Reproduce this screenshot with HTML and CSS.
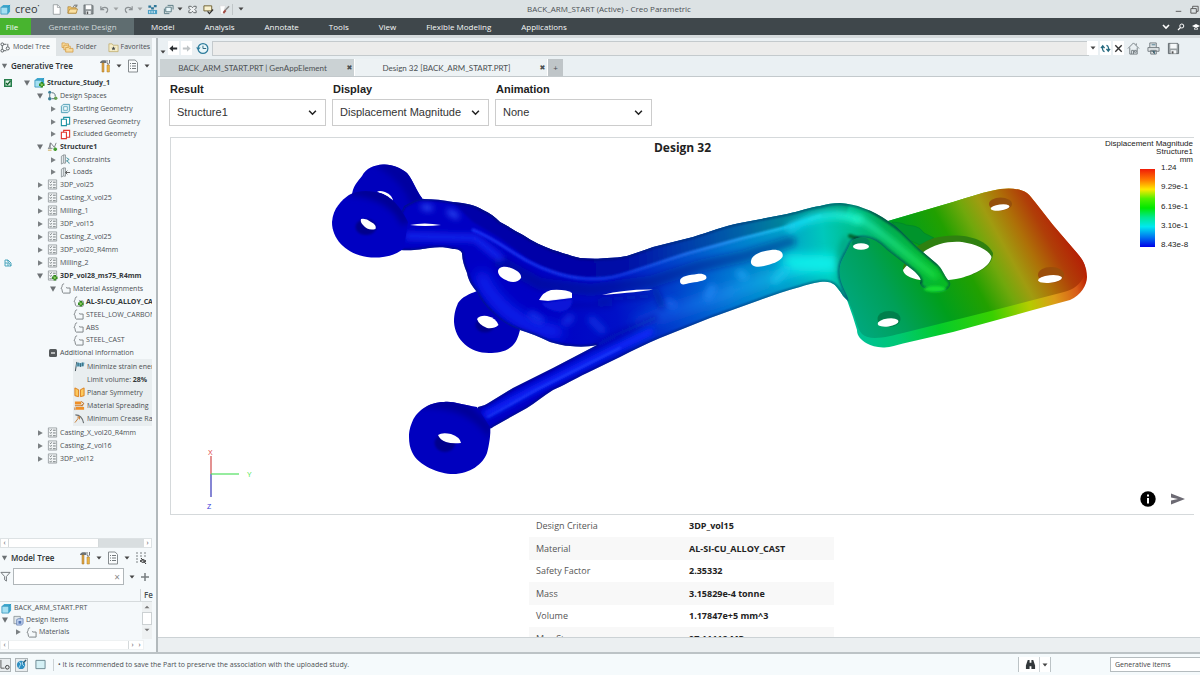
FILE: index.html
```html
<!DOCTYPE html>
<html lang="en">
<head>
<meta charset="utf-8">
<title>BACK_ARM_START (Active) - Creo Parametric</title>
<link rel="stylesheet" href="styles.css">
</head>
<body>
<svg class="defs" aria-hidden="true">
  <symbol id="cube" viewBox="0 0 12 12"><path d="M1 3.500 3.500 1H11v7.500L8.500 11H1z" fill="#3fa9cf"/><path d="M1 3.500h7.500V11H1z" fill="#a5e0f2"/><path d="M1 3.500h7.500V11H1z M8.500 3.500 11 1" fill="none" stroke="#2b8fb8" stroke-width=".8"/></symbol>
  <symbol id="down" viewBox="0 0 6 6"><path d="M.5 1.500h5L3 4.500z" fill="#444"/></symbol>
  <symbol id="open" viewBox="0 0 8 8"><path d="M1 1.500h6L4 6.800z" fill="#6c7174"/></symbol>
  <symbol id="shut" viewBox="0 0 8 8"><path d="M2 1.200v5.600L6.800 4z" fill="#7b8083"/></symbol>
  <symbol id="page" viewBox="0 0 12 12"><path d="M2.500.8h4.700L10 3.600v7.600H2.500z" fill="#fff" stroke="#888e91" stroke-width=".8"/><path d="M7 .8v3h3" fill="none" stroke="#888e91" stroke-width=".7"/></symbol>
  <symbol id="folder" viewBox="0 0 12 12"><path d="M1 10V3h3l1 1h5v6z" fill="#f1c56d" stroke="#a67b2d" stroke-width=".7"/><path d="m1 10 2-4.500h8.500L10 10z" fill="#fbe0a0" stroke="#a67b2d" stroke-width=".7"/><path d="M7 3c.5-2 2-2 3-1.500M10.800.5v2H9" fill="none" stroke="#444" stroke-width=".8"/></symbol>
  <symbol id="save" viewBox="0 0 12 12"><path d="M1 1h9l1 1v9H1z" fill="#8b9295" stroke="#555c60" stroke-width=".7"/><path d="M3 1.300h6v4.400H3z" fill="#fff"/><path d="M3.500 7.500h5V11h-5z" fill="#e8ecee"/><path d="M4.200 8.200h1.500V11H4.200z" fill="#555"/></symbol>
  <symbol id="undo" viewBox="0 0 12 12"><path d="M2 2.500v3.700h3.700M2.300 6C4 3 9 3 9.500 6c.2 1.700-.7 2.800-2 3.500" fill="none" stroke="#8b9194" stroke-width="1.300"/></symbol>
  <symbol id="redo" viewBox="0 0 12 12"><path d="M10 2.500v3.700H6.300M9.700 6C8 3 3 3 2.500 6c-.2 1.700.7 2.800 2 3.500" fill="none" stroke="#8b9194" stroke-width="1.300"/></symbol>
  <symbol id="regen" viewBox="0 0 12 12"><path d="M1.500 1.500h3v2.500h-3zM7.500 1h3v2.500h-3zM4.500 3.500h3V6h-3z" fill="#2f7698"/><path d="M1 6.500h10v4.500H1z" fill="#4c9fc4"/><path d="M3 7.500v2.500M5.500 7.500v2.500M8 7.500v2.500" stroke="#e6f4fa"/></symbol>
  <symbol id="windows" viewBox="0 0 12 12"><path d="M3 3.500h6v5H3z" fill="#eaf7fb" stroke="#54767f"/><path d="M5 1.500h6V6M1.500 5v5.500H7" fill="none" stroke="#54767f"/></symbol>
  <symbol id="closewin" viewBox="0 0 12 12"><path d="M2 2.500h2.500L6 4l1.500-1.500H10v2L8.500 6 10 7.500v2H7.500L6 8 4.500 9.500H2v-2L3.500 6 2 4.500z" fill="#eef1f2" stroke="#4c5255" stroke-width=".9"/></symbol>
  <symbol id="select" viewBox="0 0 12 12"><path d="M1 2h8.500v5.500H1z" fill="#f8f1cf" stroke="#6a5c2c" stroke-width="1"/><path d="m5 8 2 2.500L11 6" fill="none" stroke="#333" stroke-width="1.300"/></symbol>
  <symbol id="brush" viewBox="0 0 12 12"><path d="M1 2h6L4.500 11H2z" fill="#fff" stroke="#ccc" stroke-width=".5"/><path d="m11 2.500-4 4" stroke="#888" stroke-width="1.700"/><path d="m6.500 6 1.500 1.500-2.500 3-1.500-1.500z" fill="#a04a42"/></symbol>
  <symbol id="struct" viewBox="0 0 12 12"><circle cx="2.500" cy="2.500" r="1.500"/><circle cx="2.500" cy="9.500" r="1.500"/><circle cx="8.500" cy="7" r="1.700"/><path d="M2.500 4v4M4 2.500h3M4 9.500h3M8.500 2v3"/></symbol>
  <symbol id="folders" viewBox="0 0 14 12"><g fill="#f8dc9f" stroke="#d3983e" stroke-width=".8"><path d="M1 1h3l1 1h3v4H1z"/><path d="M3 3.500h3l1 1h3v4H3z"/><path d="M5 6h3l1 1h4v4H5z"/></g></symbol>
  <symbol id="fav" viewBox="0 0 12 12"><path d="M1 10.500V2h3.500l1 1.500H11v7z" fill="#f5edc9" stroke="#bca765" stroke-width=".8"/><path d="m6 4.700.7 1.500 1.600.2-1.200 1 .4 1.600L6 8.200 4.500 9l.4-1.600-1.200-1 1.600-.2z" fill="#43494b"/></symbol>
  <symbol id="tools" viewBox="0 0 12 14"><path d="M1 3.500C2 1 4.500 1 7 1.500L7 4H1z" fill="#6d7376"/><path d="M3 4h2v9H3z" fill="#dca545" stroke="#a87524" stroke-width=".5"/><path d="M8 6h2.400v7H8z" fill="#f0b844" stroke="#a87524" stroke-width=".5"/><path d="M8 1v3l1.200 1.500L10.500 4V1" fill="none" stroke="#777" stroke-width="1"/></symbol>
  <symbol id="list" viewBox="0 0 12 14"><path d="M1.500 1h6.700L10.500 3.500V13h-9z" fill="#fafcfd" stroke="#868c8f"/><path d="M3 4.500h1M3 7h1M3 9.500h1M5 4.500h4M5 7h4M5 9.500h4" stroke="#73797c"/></symbol>
  <symbol id="design" viewBox="0 0 12 12"><circle cx="3" cy="2.500" r="1.700" fill="#3c8199"/><circle cx="3" cy="9.500" r="1.900" fill="#3c8199"/><circle cx="9.500" cy="9" r="1.900" fill="#65a14e"/><path d="M3 4v4M5 3c3 0 4 1 4 4M5 9.500h3" fill="none" stroke="#4d6870"/></symbol>
  <symbol id="items" viewBox="0 0 12 12"><path d="M1 1.500h7v8H1z" fill="#dfe6ea" stroke="#7f888c" stroke-width=".8"/><path d="M4 5 6 4h5v5l-1.500 2H4z" fill="#c3d3ee" stroke="#5d79b0" stroke-width=".8"/><path d="M6 6.500h3v3H6z" fill="#5577b5"/></symbol>
  <symbol id="box" viewBox="0 0 12 12"><path d="M1.500 3.500 3.500 1.500h7v7l-2 2h-7z" fill="#d4edf4" stroke="#4a9bb2"/><path d="M4 4h4v4H4z" fill="#f4fbfd" stroke="#4a9bb2" stroke-width=".8"/></symbol>
  <symbol id="copy" viewBox="0 0 12 12"><path d="M4 4V1.500h6.500V9H7" fill="#fff" stroke="currentColor" stroke-width="1.200"/><path d="M1.500 3.500h5.500v7H1.500z" fill="#fff" stroke="currentColor" stroke-width="1.200"/></symbol>
  <symbol id="truss" viewBox="0 0 12 12"><path d="M2 8 4 2l4 5 2-5M1 8h5M3.500 2v6" fill="none" stroke="#777d80"/><path d="M9 7v4M7 9h4" stroke="#3f9b2a" stroke-width="2"/><path d="M1 10h4" stroke="#c8a34c"/></symbol>
  <symbol id="constraint" viewBox="0 0 12 12"><path d="M1.500 2.500 4 1v8.500L1.500 11zM4 1h2v9H4" fill="#e4eaed" stroke="#7d8588" stroke-width=".8"/><path d="m7 4 3 2-3 1.500 3 2v1" fill="none" stroke="#3c8e9d"/></symbol>
  <symbol id="load" viewBox="0 0 12 12"><path d="M1.500 2.500 4 1v8.500L1.500 11zM4 1h2v9H4" fill="#e4eaed" stroke="#7d8588" stroke-width=".8"/><path d="M11 6H6M8 4 6 6l2 2" fill="none" stroke="#555"/></symbol>
  <symbol id="study" viewBox="0 0 12 12"><path d="M1.500 1h9v10h-9z" fill="#f3f6f7" stroke="#868d90" stroke-width=".8"/><path d="m3 3 1 1 1-1.500M3 6l1 1 1-1.500M3 9l1 1 1-1.500M6.500 3.500h3M6.500 6.500h3M6.500 9.500h3" fill="none" stroke="#5e6669" stroke-width=".9"/></symbol>
  <symbol id="plus" viewBox="0 0 12 12"><path d="M8.500 5.500v6M5.500 8.500h6" stroke="#2f8b1d" stroke-width="2.600"/><path d="M8.500 7v3M7 8.500h3" stroke="#b2e07f" stroke-width=".8"/></symbol>
  <symbol id="material" viewBox="0 0 12 12"><path d="M4.500 1C1 1 3.500 4.500 1 5.500 3 6.500 2 11 3.500 11H11V5.500H7.500L6.500 4.500" fill="none" stroke="#777d80"/></symbol>
  <symbol id="flagicon" viewBox="0 0 12 12"><path d="M3 1 1.500 11" stroke="#38464e"/><path d="M3 2c2-1.500 3 1 5 0 1.500-.7 2-.5 3.500 0l-1 4C9 5 8 7 6 6c-1.500-.7-2.500 0-3.700.5z" fill="#6aaec6"/><path d="M4.500 2v4M7 2.500v4M9.500 1.700v4" stroke="#28495c" stroke-width=".8"/></symbol>
  <symbol id="planar" viewBox="0 0 12 12"><path d="M1 1 5 3v7.500L1 9.500zM11 1 7 3v7.500l4-1z" fill="#fcc95e" stroke="#d97b18"/></symbol>
  <symbol id="spread" viewBox="0 0 12 12"><path d="M1 1.500h7v3.500H1zM2 7.500h9v3H2z" fill="#ef8f26"/><path d="M1 6.300h9M8 1.500 11 4 8 6M1 8v3" fill="none" stroke="#b96718"/></symbol>
  <symbol id="crease" viewBox="0 0 12 12"><path d="M1.500 2c5 0 8 4 9 9" fill="none" stroke="#696f72" stroke-width="1.200"/><path d="M1 10.500 6 4M3.500 4.500 6 4v3" fill="none" stroke="#c77b30"/></symbol>
</svg>

<header class="titlebar">
  <svg class="ic"><use href="#cube"/></svg>
  <span class="brand">creo<sup>•</sup></span>
  <div class="quick">
    <button aria-label="New"><svg class="ic"><use href="#page"/></svg></button>
    <button aria-label="Open"><svg class="ic"><use href="#folder"/></svg></button>
    <button aria-label="Save"><svg class="ic"><use href="#save"/></svg></button>
    <button aria-label="Undo"><svg class="ic"><use href="#undo"/></svg></button>
    <button class="arrow faint" aria-label="Undo list"><svg><use href="#down"/></svg></button>
    <button aria-label="Redo"><svg class="ic"><use href="#redo"/></svg></button>
    <button class="arrow faint" aria-label="Redo list"><svg><use href="#down"/></svg></button>
    <button aria-label="Regenerate"><svg class="ic"><use href="#regen"/></svg></button>
    <button aria-label="Windows"><svg class="ic"><use href="#windows"/></svg></button>
    <button class="arrow" aria-label="Window list"><svg><use href="#down"/></svg></button>
    <button aria-label="Close"><svg class="ic"><use href="#closewin"/></svg></button>
    <button aria-label="Select"><svg class="ic"><use href="#select"/></svg></button>
    <button aria-label="Appearance"><svg class="ic"><use href="#brush"/></svg></button>
    <button class="arrow last" aria-label="Customize"><svg><use href="#down"/></svg></button>
  </div>
  <h1>BACK_ARM_START (Active) - Creo Parametric</h1>
  <div class="winbtns">
    <button aria-label="Minimize"><svg class="ic" viewBox="0 0 12 12"><path d="M3 8h6" stroke="#555"/></svg></button>
    <button aria-label="Restore"><svg class="ic" viewBox="0 0 12 12"><path d="M2 5h6v5H2zM4 5V2.500h6V8H8" fill="none" stroke="#555"/></svg></button>
  </div>
</header>

<nav class="ribbon">
  <button class="file">File</button>
  <button class="current">Generative Design</button>
  <button>Model</button><button>Analysis</button><button>Annotate</button><button>Tools</button><button>View</button><button>Flexible Modeling</button><button>Applications</button>
  <div class="right">
    <button aria-label="Collapse ribbon"><svg viewBox="0 0 8 8"><path d="m1 2 3 3 3-3" fill="none" stroke="#fff" stroke-width="1.600"/></svg></button>
    <button aria-label="Search"><svg viewBox="0 0 8 8"><circle cx="4.800" cy="3" r="2" fill="none" stroke="#fff"/><path d="M3.500 4.500 1 7" stroke="#fff" stroke-width="1.300"/></svg></button>
    <button aria-label="Learning"><svg viewBox="0 0 8 8"><path d="m0 3 4-2 4 2-4 2zM2 5v1.500h4V5L4 6z" fill="#fff"/></svg></button>
  </div>
</nav>

<div class="work">
  <aside class="side">
    <div class="sidetabs">
      <button class="on"><svg class="ic line"><use href="#struct"/></svg>Model Tree</button>
      <button><svg class="ic wide"><use href="#folders"/></svg>Folder</button>
      <button><svg class="ic"><use href="#fav"/></svg>Favorites</button>
    </div>
    <div class="panelhead">
      <svg class="tri"><use href="#open"/></svg><h2>Generative Tree</h2>
      <button aria-label="Settings"><svg class="tool"><use href="#tools"/></svg><svg class="dn"><use href="#down"/></svg></button>
      <button aria-label="Show"><svg class="tool"><use href="#list"/></svg><svg class="dn"><use href="#down"/></svg></button>
    </div>
    <ul class="tree">
      <li><div class="row strong"><svg class="flag" viewBox="0 0 8 8"><path d="M0 0h8v8H0z" fill="#267e4b"/><path d="M1.500 1.500h5v5h-5z" fill="#dff3e5"/><path d="m2 4 1.500 1.500L6.500 2" fill="none" stroke="#14612f" stroke-width="1.200"/></svg><svg class="tri"><use href="#open"/></svg><svg class="ic"><use href="#cube"/><use href="#plus"/></svg>Structure_Study_1</div>
        <ul>
          <li><div class="row"><svg class="tri"><use href="#open"/></svg><svg class="ic"><use href="#design"/></svg>Design Spaces</div>
            <ul>
              <li><div class="row"><svg class="tri"><use href="#shut"/></svg><svg class="ic"><use href="#box"/></svg>Starting Geometry</div></li>
              <li><div class="row"><svg class="tri"><use href="#shut"/></svg><svg class="ic teal"><use href="#copy"/></svg>Preserved Geometry</div></li>
              <li><div class="row"><svg class="tri"><use href="#shut"/></svg><svg class="ic red"><use href="#copy"/></svg>Excluded Geometry</div></li>
            </ul></li>
          <li><div class="row strong"><svg class="tri"><use href="#open"/></svg><svg class="ic"><use href="#truss"/></svg>Structure1</div>
            <ul>
              <li><div class="row"><svg class="tri"><use href="#shut"/></svg><svg class="ic"><use href="#constraint"/></svg>Constraints</div></li>
              <li><div class="row"><svg class="tri"><use href="#shut"/></svg><svg class="ic"><use href="#load"/></svg>Loads</div></li>
            </ul></li>
          <li><div class="row"><svg class="tri"><use href="#shut"/></svg><svg class="ic"><use href="#study"/></svg>3DP_vol25</div></li>
          <li><div class="row"><svg class="tri"><use href="#shut"/></svg><svg class="ic"><use href="#study"/></svg>Casting_X_vol25</div></li>
          <li><div class="row"><svg class="tri"><use href="#shut"/></svg><svg class="ic"><use href="#study"/></svg>Milling_1</div></li>
          <li><div class="row"><svg class="tri"><use href="#shut"/></svg><svg class="ic"><use href="#study"/></svg>3DP_vol15</div></li>
          <li><div class="row"><svg class="tri"><use href="#shut"/></svg><svg class="ic"><use href="#study"/></svg>Casting_Z_vol25</div></li>
          <li><div class="row"><svg class="tri"><use href="#shut"/></svg><svg class="ic"><use href="#study"/></svg>3DP_vol20_R4mm</div></li>
          <li><div class="row"><svg class="flag" viewBox="0 0 8 8"><path d="M1 1h3l3 3v3H1zM1 4h3v3M3 1l4 6" fill="none" stroke="#4ba6bd"/></svg><svg class="tri"><use href="#shut"/></svg><svg class="ic"><use href="#study"/></svg>Milling_2</div></li>
          <li><div class="row strong"><svg class="tri"><use href="#open"/></svg><svg class="ic"><use href="#study"/><use href="#plus"/></svg>3DP_vol28_ms75_R4mm</div>
            <ul>
              <li><div class="row"><svg class="tri"><use href="#open"/></svg><svg class="ic"><use href="#material"/></svg>Material Assignments</div>
                <ul>
                  <li><div class="row strong"><svg class="tri"></svg><svg class="ic"><use href="#material"/><use href="#plus"/></svg>AL-SI-CU_ALLOY_CAST</div></li>
                  <li><div class="row"><svg class="tri"></svg><svg class="ic"><use href="#material"/></svg>STEEL_LOW_CARBON</div></li>
                  <li><div class="row"><svg class="tri"></svg><svg class="ic"><use href="#material"/></svg>ABS</div></li>
                  <li><div class="row"><svg class="tri"></svg><svg class="ic"><use href="#material"/></svg>STEEL_CAST</div></li>
                </ul></li>
              <li><div class="row more"><svg class="tri" viewBox="0 0 8 8"><rect width="8" height="8" rx="1.500" fill="#55595b"/><path d="M2 4h4" stroke="#fff" stroke-width="1.200"/></svg>Additional Information</div>
                <div class="info">
                  <div class="row"><svg class="ic"><use href="#flagicon"/></svg>Minimize strain energy</div>
                  <div class="row"><svg class="ic"></svg><span>Limit volume: <b>28%</b></span></div>
                  <div class="row"><svg class="ic"><use href="#planar"/></svg>Planar Symmetry</div>
                  <div class="row"><svg class="ic"><use href="#spread"/></svg>Material Spreading</div>
                  <div class="row"><svg class="ic"><use href="#crease"/></svg>Minimum Crease Radius</div>
                </div></li>
            </ul></li>
          <li><div class="row"><svg class="tri"><use href="#shut"/></svg><svg class="ic"><use href="#study"/></svg>Casting_X_vol20_R4mm</div></li>
          <li><div class="row"><svg class="tri"><use href="#shut"/></svg><svg class="ic"><use href="#study"/></svg>Casting_Z_vol16</div></li>
          <li><div class="row"><svg class="tri"><use href="#shut"/></svg><svg class="ic"><use href="#study"/></svg>3DP_vol12</div></li>
        </ul></li>
    </ul>
    <div class="hbar"><span>‹</span><i class="thumb"></i><i class="track"></i><span>›</span></div>

    <div class="panelhead lower">
      <svg class="tri"><use href="#open"/></svg><h2>Model Tree</h2>
      <button aria-label="Settings"><svg class="tool"><use href="#tools"/></svg><svg class="dn"><use href="#down"/></svg></button>
      <button aria-label="Show"><svg class="tool"><use href="#list"/></svg><svg class="dn"><use href="#down"/></svg></button>
      <button aria-label="Hide items"><svg class="tool" viewBox="0 0 12 14"><path d="M1 2h2M1 5h2M1 8h2M1 11h2M5 2h2M5 5h2M9 2h2M9 5h2" stroke="#a2a8aa" stroke-width="1.500"/><path d="M5 10q3-3 6 0-3 3-6 0M6 7l5 6" fill="none" stroke="#333"/></svg></button>
    </div>
    <div class="filter">
      <svg class="ic" viewBox="0 0 12 12"><path d="M1 1.500h10L7 6v5L5 9.500V6z" fill="none" stroke="#6c7275"/></svg>
      <label class="box"><input type="text" aria-label="Filter tree"><span>×</span></label>
      <button aria-label="Filter options"><svg class="dn"><use href="#down"/></svg></button>
      <button class="add" aria-label="Add"><svg class="tri" viewBox="0 0 8 8"><path d="M4 0v8M0 4h8" stroke="#777d80" stroke-width="1.500"/></svg></button>
    </div>
    <div class="colhead"><span>Fe</span></div>
    <div class="model">
      <ul>
        <li><svg class="ic"><use href="#cube"/></svg>BACK_ARM_START.PRT</li>
        <li><svg class="tri"><use href="#open"/></svg><svg class="ic"><use href="#items"/></svg>Design Items</li>
        <li class="deep"><svg class="tri"><use href="#shut"/></svg><svg class="ic"><use href="#material"/></svg>Materials</li>
        <li class="deep"><svg class="tri"></svg><svg class="ic"><use href="#cube"/></svg></li>
      </ul>
      <div class="vbar"><svg viewBox="0 0 8 8"><path d="m2 5 2-2 2 2z" fill="#777"/></svg><i></i><svg viewBox="0 0 8 8"><path d="m2 3 2 2 2-2z" fill="#777"/></svg></div>
    </div>
    <div class="hbar low"><span>‹</span><i class="thumb"></i><span>›</span><span>›</span></div>
  </aside>

  <main class="main">
    <div class="address">
      <svg class="dn"><use href="#down"/></svg>
      <button class="boxed" aria-label="Back"><svg class="ic" viewBox="0 0 12 12"><path d="M1.500 6 5.500 2.500V5H10v2H5.500v2.500z" fill="#2a2e30"/></svg></button>
      <button class="boxed" aria-label="Forward"><svg class="ic" viewBox="0 0 12 12"><path d="M10.500 6 6.500 2.500V5H2v2h4.500v2.500z" fill="#bfc4c6"/></svg></button>
      <button class="history" aria-label="History"><svg class="big" viewBox="0 0 14 14"><circle cx="7.500" cy="7" r="5.300" fill="#e8f6fa" stroke="#2d7c9c" stroke-width="1.300"/><path d="M7.500 4v3H11" fill="none" stroke="#27617a"/><path d="M0 6h5L2.500 9z" fill="#2d7c9c"/></svg></button>
      <input type="text" aria-label="Address">
      <button class="boxed" aria-label="Address list"><svg class="dn"><use href="#down"/></svg></button>
      <button class="boxed" aria-label="Reload"><svg class="ic" viewBox="0 0 12 12"><path d="M5 9.500C2.500 9 2.500 6 3 4M1 5.500 3 3l2 2.500M7 2.500C9.500 3 9.500 6 9 8M11 6.500 9 9 7 6.500" fill="none" stroke="#276b80" stroke-width="1.400"/></svg></button>
      <button class="boxed" aria-label="Stop"><svg class="ic" viewBox="0 0 12 12"><path d="m2.500 2.500 7 7M9.500 2.500l-7 7" stroke="#333" stroke-width="1.500"/></svg></button>
      <div class="page">
        <button aria-label="Home"><svg class="big" viewBox="0 0 14 14"><path d="m1 7 6-6 6 6M3 6v7h8V6M10 1.500v2M5 13V9h2v4M8 9h2v2H8z" fill="none" stroke="#737b7f"/></svg></button>
        <button aria-label="Print"><svg class="big" viewBox="0 0 14 14"><path d="M3 6V1h7v5M1 6h12v4H1zM4 9h6v4H4z" fill="#dfe4e6" stroke="#737b7f"/><path d="M5 3h4M6 10h2v3" stroke="#49788a"/></svg></button>
        <button aria-label="Save page"><svg class="big" viewBox="0 0 14 14"><path d="M1.500 1.500h10l1 1v10h-11z" fill="#9aa1a4" stroke="#60686c"/><path d="M3.500 2h7v5h-7zM4 9h6v3.500H4z" fill="#f6f9fa"/><path d="M5 10h2v2.500H5z" fill="#555"/></svg></button>
      </div>
    </div>
    <div class="doctabs">
      <button class="tab"><span>BACK_ARM_START.PRT | GenAppElement</span><b>✖</b></button>
      <button class="tab on"><span>Design 32 [BACK_ARM_START.PRT]</span><b>✖</b></button>
      <button class="new" aria-label="New tab">+</button>
    </div>
    <section class="content">
      <form class="controls">
        <div class="field"><label for="result">Result</label><div class="pick"><select id="result"><option>Structure1</option></select><svg viewBox="0 0 8 8"><path d="m1 2.500 3 3 3-3" fill="none" stroke="#222" stroke-width="1.400"/></svg></div></div>
        <div class="field"><label for="display">Display</label><div class="pick"><select id="display"><option>Displacement Magnitude</option></select><svg viewBox="0 0 8 8"><path d="m1 2.500 3 3 3-3" fill="none" stroke="#222" stroke-width="1.400"/></svg></div></div>
        <div class="field"><label for="animation">Animation</label><div class="pick"><select id="animation"><option>None</option></select><svg viewBox="0 0 8 8"><path d="m1 2.500 3 3 3-3" fill="none" stroke="#222" stroke-width="1.400"/></svg></div></div>
      </form>
      <div class="viewer">
        <svg class="scene" viewBox="171 138 1023 376" role="img" aria-label="Displacement magnitude on the back arm">
          <defs>
            <linearGradient id="gPlate" gradientUnits="userSpaceOnUse" x1="857" y1="333" x2="1059" y2="221">
              <stop offset="0" stop-color="#00a880"/><stop offset=".2" stop-color="#00a058"/><stop offset=".38" stop-color="#009f1c"/><stop offset=".55" stop-color="#22a000"/><stop offset=".66" stop-color="#70a80c"/><stop offset=".74" stop-color="#a09c10"/><stop offset=".83" stop-color="#ae7008"/><stop offset=".92" stop-color="#b03e08"/><stop offset="1" stop-color="#b42206"/>
            </linearGradient>
            <linearGradient id="gEdge" gradientUnits="userSpaceOnUse" x1="855" y1="340" x2="1087" y2="280">
              <stop offset="0" stop-color="#00c098"/><stop offset=".18" stop-color="#00c874"/><stop offset=".35" stop-color="#04cc2c"/><stop offset=".58" stop-color="#38d000"/><stop offset=".74" stop-color="#b4cc00"/><stop offset=".85" stop-color="#dc9c18"/><stop offset=".95" stop-color="#d85a18"/><stop offset="1" stop-color="#b82000"/>
            </linearGradient>
            <linearGradient id="gBeam" gradientUnits="userSpaceOnUse" x1="540" y1="300" x2="950" y2="250">
              <stop offset="0" stop-color="#0000c4"/><stop offset=".18" stop-color="#0010c8"/><stop offset=".32" stop-color="#0040cc"/><stop offset=".46" stop-color="#0074d2"/><stop offset=".6" stop-color="#009fca"/><stop offset=".7" stop-color="#00c8bc"/><stop offset=".77" stop-color="#00c090"/><stop offset=".85" stop-color="#00ac54"/><stop offset="1" stop-color="#08bc1c"/>
            </linearGradient>
            <linearGradient id="gTop" gradientUnits="userSpaceOnUse" x1="480" y1="240" x2="860" y2="205">
              <stop offset="0" stop-color="#0000a8"/><stop offset=".35" stop-color="#0008a8"/><stop offset=".5" stop-color="#0034ac"/><stop offset=".68" stop-color="#0062a8"/><stop offset=".82" stop-color="#008c98"/><stop offset="1" stop-color="#00a874"/>
            </linearGradient>
            <linearGradient id="gHi" gradientUnits="userSpaceOnUse" x1="480" y1="240" x2="950" y2="270">
              <stop offset="0" stop-color="#1c30f4"/><stop offset=".3" stop-color="#1034e0"/><stop offset=".52" stop-color="#2490f4"/><stop offset=".68" stop-color="#10d4e8"/><stop offset=".8" stop-color="#20f4c4"/><stop offset="1" stop-color="#20e830"/>
            </linearGradient>
            <filter id="b1" filterUnits="userSpaceOnUse" x="171" y="138" width="1023" height="376"><feGaussianBlur stdDeviation="1"/></filter>
            <filter id="b3" filterUnits="userSpaceOnUse" x="171" y="138" width="1023" height="376"><feGaussianBlur stdDeviation="3"/></filter>
            <filter id="b6" filterUnits="userSpaceOnUse" x="171" y="138" width="1023" height="376"><feGaussianBlur stdDeviation="6"/></filter>
            <path id="beam" d="M404 206C411 203 416 198 424 199 434 199 443 200 453 202 466 203 475 205 483 210 490 213 495 217 500 222 508 226 515 231 523 235 533 242 543 246 553 250 563 253 571 256 580 258 590 259 600 259 607 258 615 258 621 257 627 256 636 253 645 250 653 247L693 237C709 232 724 226 740 223L787 214C800 211 811 207 820 206 827 204 833 203 840 203 849 204 856 205 863 208 872 211 881 216 888 221 895 225 898 228 902 232L917 247 937 264C942 268 944 275 948 280 954 284 948 292 938 292 930 291 920 288 920 283 922 279 920 277 914 271L887 250C880 243 876 240 868 238 860 236 852 239 850 244 844 258 838 262 840 277 842 288 848 294 849 302L843 296C840 291 838 288 835 285 831 282 827 281 820 282 812 283 806 285 800 287 786 291 773 295 760 300L710 318 660 338C646 344 633 350 620 357L587 373C574 379 563 386 553 390 543 396 535 403 527 408L493 427C488 432 476 424 478 414L478 407C483 406 487 404 490 402L513 388 553 368 597 345C588 347 579 347 570 346 564 346 558 344 550 342 540 337 530 333 520 330 508 326 500 320 494 314 485 306 480 299 477 292 472 286 468 280 467 273 464 266 462 259 462 253 460 250 458 249 453 249 445 247 438 247 430 248 422 249 414 251 400 250L396 225Z"/>
            <clipPath id="beamClip"><use href="#beam"/></clipPath>
            <path id="eyeBack" d="M352 196C352 187 358 181 362 176 366 168 374 165 383 164.500 392 164 401 168 407 173 413 180 416 190 422 198L425 210 410 224 396 230 372 215Z"/>
            <clipPath id="eyeBackClip"><use href="#eyeBack"/></clipPath>
            <path id="eyeFront" d="M332 222C333 208 342 200 349 195 358 190 371 190 383 194 396 200 403 212 408 222L404 248C396 256 382 258 371 257.500 350 256 332 242 332 222Z"/>
            <clipPath id="eyeFrontClip"><use href="#eyeFront"/></clipPath>
            <path id="eyeLow" d="M409 437C409 431 410 427 413 420 417 412 428 402 444 402 454 401 462 405 477 407L490 427C491 434 489 446 487 453 483 464 470 474 453 474 440 474 418 466 412 452 410 448 409 443 409 437Z"/>
            <clipPath id="eyeLowClip"><use href="#eyeLow"/></clipPath>
          </defs>
          <!-- mounting plate -->
          <path d="M888 221 953 202C967 198 980 193 993 190.500 1003 188 1018 187 1027 193 1030 195 1033 200 1035 202L1053 225 1077 253C1082 259 1087 266 1087 277 1087 285 1081 295 1070 300L1033 310 953 332 903 343.500C896 345 890 348 883 347.500 876 347 871 346 867 343.500 861 340 857 336 857 330L853 317 847 300 834 284 840 240Z" fill="url(#gEdge)"/>
          <path d="M888 221 953 202C967 198 980 193 993 190.500 1003 188 1018 187 1027 193 1030 195 1033 200 1035 202L1053 225 1077 253C1083 260 1088 267 1084 276 1081 284 1073 290 1064 292L987 312 903 333C890 336 870 342 862 334 857 328 856 320 853 312L847 298 838 284 842 235Z" fill="url(#gPlate)"/>
          <path d="M892 222Q903 223 906 225L914 226Q920 227 924 233L934 238 920 245 905 238Z" fill="#00942c" stroke="#00802a" stroke-width=".6"/>
          <g stroke="none">
            <path d="M903 267Q908 247 934 238C957 232 985 236 993 253Q993 268 968 276L940 281 920 280Q902 277 903 267Z" fill="#2f8010"/>
            <path d="M903 270Q906 265 922 253C935 243 950 241 962 242 976 244 989 250 991.500 257 990 267 975 274 961 278 952 280 942 281 934 280L920 280Q904 277 903 270Z" fill="#fff"/>
            <ellipse cx="861" cy="243" rx="9" ry="6" fill="#00865a"/><ellipse cx="861" cy="246.500" rx="8" ry="3.200" fill="#fff"/>
            <ellipse cx="1000.500" cy="204" rx="11.500" ry="6.500" fill="#96500c"/><ellipse cx="1000" cy="207.500" rx="9.500" ry="3" fill="#fff" transform="rotate(-8 1000 207)"/>
            <ellipse cx="1051" cy="275" rx="13" ry="8" fill="#9c4e0a"/><ellipse cx="1050" cy="279" rx="12" ry="3.800" fill="#fff" transform="rotate(-6 1050 279)"/>
            <ellipse cx="889" cy="319" rx="11.500" ry="8" fill="#00804c"/><ellipse cx="888" cy="322.500" rx="10.500" ry="4" fill="#fff" transform="rotate(-8 888 322)"/>
          </g>
          <!-- mounting eyes behind the beam -->
          <use href="#eyeBack" fill="#0000bd"/>
          <g clip-path="url(#eyeBackClip)"><path d="M383 160C392 160 401 164 411 171 417 180 420 190 426 200L412 208C406 190 396 178 376 166Z" fill="#0000a0" filter="url(#b3)"/></g>
          <path d="M377 192Q379 190 385 192 393 195 393 202 386 194 377 192Z" fill="#fff"/>
          <path d="M454 322C454 313 456 308 458 303 462 297 469 294 477 291L520 330C518 338 516 343 511 347 505 352 497 353 489 353 470 353 455 340 454 322Z" fill="#0000ba"/>
          <ellipse cx="485" cy="325" rx="9.500" ry="7.500" fill="#00008c" filter="url(#b1)"/>
          <path d="M477 319Q480 315 487 316 496 318 498.500 325 494 329 487 328 479 325 477 319Z" fill="#fff"/>
          <!-- beam -->
          <use href="#beam" fill="url(#gBeam)"/>
          <g clip-path="url(#beamClip)" fill="none" stroke-linecap="round">
            <path d="M450 200 483 208 523 233 553 248 580 256 607 257 627 254 693 235 740 221 820 204 850 202 846 216 820 216 787 227 740 240 693 253 643 268 610 278 580 278 553 272 527 258 500 238 473 222Z" fill="url(#gTop)" filter="url(#b1)"/>
            <path d="M500 262 540 284 590 290 650 282 700 266 745 256 790 242" stroke="#001a80" stroke-opacity=".45" stroke-width="12" filter="url(#b3)"/>
            <path d="M473 230C500 240 520 262 553 272 575 280 600 280 613 277 640 270 665 260 693 252L740 239 787 227 820 216" stroke="url(#gHi)" stroke-width="3" filter="url(#b1)"/>
            <path d="M790 228C815 214 838 211 858 220" stroke="url(#gHi)" stroke-width="9" filter="url(#b3)"/>
            <path d="M858 218C878 228 900 250 935 276" stroke="url(#gHi)" stroke-width="6" stroke-opacity=".75" filter="url(#b3)"/>
            <path d="M640 322 710 299 770 278 825 262" stroke="url(#gHi)" stroke-width="12" stroke-opacity=".65" filter="url(#b6)"/>
            <path d="M790 262 832 264" stroke="#10f0ec" stroke-width="16" filter="url(#b6)"/>
            <path d="M846 240C838 255 840 272 846 292" stroke="#009878" stroke-width="7" stroke-opacity=".7" filter="url(#b3)"/>
            <path d="M487 414 530 391 600 356 650 332" stroke="#1028ff" stroke-width="7" filter="url(#b3)"/>
            <path d="M488 417 540 388 620 348" stroke="#2448ff" stroke-width="2" stroke-opacity=".7" filter="url(#b1)"/>
            <path d="M408 236 440 237 475 238 500 258" stroke="#1428f0" stroke-width="7" filter="url(#b3)"/>
            <path d="M424 207 430 208M450 212 456 216" stroke="#2c48f4" stroke-width="6" filter="url(#b3)"/>
            <path d="M482 278C492 300 516 326 556 332" stroke="#1030ff" stroke-width="14" stroke-opacity=".7" filter="url(#b6)"/>
            <path d="M668 302 673 305M708 296 712 288M740 274 744 276M775 280 786 270M532 315 540 320M592 320 602 330M566 322 570 318" stroke="url(#gHi)" stroke-width="8" stroke-opacity=".85" filter="url(#b3)"/>
            <path d="M850 236C878 244 900 266 920 282" stroke="#006830" stroke-width="4" filter="url(#b1)"/>
            <path d="M597 345 620 333 655 318M565 305 610 305M600 300 650 296" stroke="#0010a0" stroke-opacity=".6" stroke-width="5" filter="url(#b3)"/>
            <path d="M655 290 662 306" stroke="#001890" stroke-opacity=".7" stroke-width="4" filter="url(#b3)"/>
            <path d="M870 210 902 232 937 264" stroke="#007040" stroke-width="2" filter="url(#b1)"/>
            <use href="#beam" stroke="#001c50" stroke-opacity=".5" stroke-width="3" filter="url(#b1)"/>
          </g>
          <ellipse cx="935" cy="289" rx="11" ry="3" fill="#18dc30" filter="url(#b1)"/>
          <!-- openings through the beam -->
          <g fill="#fff">
            <path d="M410 225Q424 222 441 225 425 227 410 225Z"/>
            <path d="M498 271C499 266 506 266 511 268 517 270 522 274 521 278 518 283 511 283 506 280 501 278 498 275 498 271Z"/>
            <path d="M539 300Q543 292 551 290 566 289 572 293V298L548 301Z"/>
            <path d="M602 295Q625 289 653 289.500 640 292 602 295Z"/>
            <path d="M680 281C680 276 690 275 697 274 704 273 708 276 706 279 702 282 693 282 686 284 682 285 680 284 680 281Z"/>
            <path d="M751 261C752 254 762 251 771 250 779 249 784 252 782.500 257 779 262 772 264 764 266 756 268 750 266 751 261Z"/>
          </g>
          <path d="M541 303 572 299Q573 310 560 312 548 311 541 303Z" fill="#0818d8" filter="url(#b1)"/>
          <!-- mounting eyes in front -->
          <use href="#eyeFront" fill="#0000c2"/>
          <g clip-path="url(#eyeFrontClip)"><path d="M349 190C358 186 371 186 385 191 398 198 406 210 410 222L402 226C394 208 378 198 349 195Z" fill="#000094" filter="url(#b3)"/></g>
          <ellipse cx="366" cy="227" rx="10.500" ry="8" fill="#00008c" filter="url(#b1)"/>
          <path d="M361 219Q366 218 371 222 377 225 375.500 229 368 231 363 225 360 222 361 219Z" fill="#fff"/>
          <use href="#eyeLow" fill="#0000bf"/>
          <g clip-path="url(#eyeLowClip)"><path d="M418 406C430 397 450 398 468 403L492 427 490 440C476 416 450 406 418 408Z" fill="#000098" filter="url(#b3)"/></g>
          <ellipse cx="445" cy="443" rx="10.500" ry="9" fill="#00008c" filter="url(#b1)"/>
          <path d="M438 435Q442 432 451 434 460 437 461 443 452 444 446 442 440 440 438 435Z" fill="#fff"/>
          <!-- axes -->
          <g fill="none" stroke-width="1.200"><path d="M211 456v18" stroke="#d04848"/><path d="M211 474v23" stroke="#3535b8"/><path d="M211 474h28" stroke="#50e060"/></g>
          <g class="axis"><text x="208" y="455" fill="#e04848">X</text><text x="247" y="477" fill="#58e858">Y</text><text x="207" y="509" fill="#3535d8">Z</text></g>
        </svg>
        <h2>Design 32</h2>
        <div class="legend">
          <p>Displacement Magnitude<br>Structure1<br>mm</p>
          <div class="scale"><i></i><ol><li>1.24</li><li>9.29e-1</li><li>6.19e-1</li><li>3.10e-1</li><li>8.43e-8</li></ol></div>
        </div>
        <div class="actions">
          <button aria-label="Information"><svg viewBox="0 0 16 16"><circle cx="8" cy="8" r="7.700" fill="#000"/><path d="M7 3.500h2v2H7zM7 7h2v5.500H7z" fill="#fff"/></svg></button>
          <button aria-label="Send"><svg viewBox="0 0 16 16"><path d="M1 2.500 15 8 1 13.500V9.500L8 8 1 6.500z" fill="#6c6a73"/></svg></button>
        </div>
      </div>
      <table class="facts">
        <tbody>
          <tr><th scope="row">Design Criteria</th><td>3DP_vol15</td></tr>
          <tr><th scope="row">Material</th><td>AL-SI-CU_ALLOY_CAST</td></tr>
          <tr><th scope="row">Safety Factor</th><td>2.35332</td></tr>
          <tr><th scope="row">Mass</th><td>3.15829e-4 tonne</td></tr>
          <tr><th scope="row">Volume</th><td>1.17847e+5 mm^3</td></tr>
          <tr><th scope="row">Max Stress</th><td>97.11112 MPa</td></tr>
        </tbody>
      </table>
    </section>
    <div class="strip"></div>
  </main>
</div>

<footer class="status">
  <button class="sq" aria-label="Navigator"><svg class="ic" viewBox="0 0 12 12"><path d="M1 1v9h4" fill="none" stroke="#555"/><circle cx="8" cy="9" r="2" fill="none" stroke="#333"/></svg></button>
  <button class="sq on" aria-label="Browser"><svg class="ic" viewBox="0 0 12 12"><circle cx="5.500" cy="6.500" r="4.500" fill="#2f8fc2"/><path d="M3 3q3 1 2 3T3 10M7 3q-1 3 2 5" fill="none" stroke="#c3e6f4"/><path d="M8 4 11 1" stroke="#2a5870" stroke-width="1.500"/></svg></button>
  <button class="sq plain" aria-label="Full screen"><svg class="ic" viewBox="0 0 12 12"><path d="M1 1.500h10v9H1z" fill="#d4f0f5" stroke="#67848d"/></svg></button>
  <p><span>•</span> It is recommended to save the Part to preserve the association with the uploaded study.</p>
  <div class="find"><button aria-label="Find"><svg class="ic" viewBox="0 0 12 12"><path d="M3 1h2v3h2V1h2l2 6v4H7V8H5v3H1V7z" fill="#33383b"/></svg></button><button aria-label="Find options"><svg class="dn"><use href="#down"/></svg></button></div>
  <select aria-label="Selection filter"><option>Generative items</option></select>
</footer>
</body>
</html>
```
FILE: styles.css
```css
* { box-sizing: border-box; }
body {
  margin: 0;
  height: 100vh;
  display: flex;
  flex-direction: column;
  overflow: hidden;
  background: #f5f9fb;
  color: #4b5053;
  font: 7px/12px "Open Sans", "Noto Sans", sans-serif;
}
button {
  display: flex;
  align-items: center;
  justify-content: center;
  padding: 0;
  border: 0;
  background: none;
  color: inherit;
  font: inherit;
  white-space: nowrap;
}
h1, h2, p, ul, ol { margin: 0; padding: 0; font: inherit; list-style: none; }
svg { display: block; flex: none; }
.defs { position: absolute; width: 0; height: 0; }
.ic { width: 11px; height: 11px; }
.wide { width: 13px; }
.big { width: 13px; height: 13px; }
.dn { width: 6px; height: 6px; }
.tri { width: 8px; height: 8px; }
.line { fill: none; stroke: #555b5e; }

.titlebar {
  flex: 0 0 18px;
  display: grid;
  grid-template-columns: auto auto 1fr auto 1fr;
  align-items: center;
  background: #dce2e4;
  position: relative;
}
.brand { padding-left: 4px; font: 500 11px/16px "Open Sans", sans-serif; color: #33393c; }
.brand sup { font-size: 5px; line-height: 1px; }
.quick { display: flex; padding-left: 9px; }
.quick button { width: 16px; }
.quick .arrow { width: 8px; }
.quick .arrow svg { width: 6px; height: 6px; }
.quick .faint { opacity: .4; }
.quick .last { width: 16px; border-left: 1px solid #c0c6c8; }
.titlebar h1 { position: absolute; left: 0; right: 0; padding-left: 18px; text-align: center; font-size: 8px; pointer-events: none; }
.winbtns { grid-column: 5; display: flex; gap: 5px; justify-content: flex-end; }

.ribbon { flex: 0 0 17px; display: flex; background: #3f474b; color: #f6f8f8; font-size: 8px; }
.ribbon button { padding: 0 15px; }
.ribbon .file { width: 31px; padding: 0 7px 0 0; background: #48b42f; }
.ribbon .current { width: 103px; background: #5f6d70; color: #cfd7d9; margin-right: 2px; }
.ribbon .right { margin-left: auto; display: flex; gap: 7px; }
.ribbon .right button { padding: 0; }
.ribbon .right svg { width: 8px; height: 8px; }

.work { flex: 1; min-height: 0; display: flex; border-bottom: 2px solid #bcc3c6; border-top: 3px solid #d5dadc; }
.side { flex: 0 0 158px; display: flex; flex-direction: column; border-right: 2px solid #b2b9bc; padding-right: 4px; overflow: hidden; position: relative; }
.sidetabs { display: flex; height: 18px; overflow: hidden; background: #dfe4e6; }
.sidetabs button { flex: none; gap: 2px; padding: 0 6px 0 5px; }
.sidetabs .on { padding: 0 6px 0 0; background: #f7fafb; }
.panelhead { flex: 0 0 20px; display: flex; align-items: center; gap: 5px; padding: 0 2px 0 1px; }
.lower { padding-right: 5px; }
.panelhead h2 { flex: 1; font-weight: 600; font-size: 8px; margin-left: -2px; white-space: nowrap; color: #2b3032; }
.panelhead button { gap: 5px; }
.tool { width: 12px; height: 14px; }
.panelhead .tri { width: 7px; }

.tree { flex: 1; min-height: 0; overflow: hidden; padding-left: 23px; }
.tree ul { padding-left: 13px; }
.row { display: flex; align-items: center; height: 13px; gap: 2px; white-space: nowrap; }
.tree ul ul > li:last-child > .row:not(.more) { height: 12px; }
.row .ic { margin-left: 1px; }
.row.more { gap: 3px; }
.tree .strong, .tree b { font-weight: 700; color: #33383a; }
.flag { position: absolute; left: 4px; width: 8px; height: 8px; }
.teal { color: #1f93a3; }
.red { color: #e2372f; }
.info { margin-left: 24px; padding: 1px 0; background: #e9eef0; }

.hbar { flex: 0 0 10px; display: flex; align-items: center; line-height: 8px; border: 1px solid #dde2e4; background: #fff; }
.hbar span { width: 7px; text-align: center; }
.hbar i { align-self: stretch; }
.hbar .thumb { flex: 2; border: solid #d4d9db; border-width: 0 1px; }
.hbar .track { flex: 1; background: #d9dee0; }

.filter { flex: 0 0 17px; display: flex; align-items: center; gap: 2px; }
.filter .box { flex: 1; display: flex; align-items: center; height: 17px; border: 1px solid #b0b6b9; background: #fff; padding-right: 3px; }
.filter input { flex: 1; min-width: 0; border: 0; padding: 0; background: none; outline: 0; font: inherit; }
.filter .box span { font-size: 10px; color: #888; }
.filter button { width: 12px; }
.filter .add { padding-right: 2px; }
.colhead { flex: 0 0 17px; display: flex; justify-content: flex-end; align-items: flex-end; border-bottom: 1px solid #d6dbdd; font-size: 8px; font-weight: 600; }
.colhead span { border-left: 1px solid #d0d5d7; padding-left: 3px; width: 12px; }
.model { flex: 0 0 37px; display: flex; overflow: hidden; }
.model ul { flex: 1; }
.model li { display: flex; align-items: center; height: 12px; gap: 2px; padding-left: 1px; }
.model .tri + .ic { margin-left: 2px; }
.model .deep { padding-left: 14px; }
.vbar { width: 10px; display: flex; flex-direction: column; background: #eef1f2; }
.vbar svg { width: 10px; height: 10px; }
.vbar i { height: 13px; border: 1px solid #ccd1d3; background: #fff; }
.low { margin: 1px 8px 2px 0; border-color: #eef1f2; }

.main { flex: 1; min-width: 0; display: flex; flex-direction: column; background: #eaf0f3; }
.address { flex: 0 0 20px; display: flex; align-items: center; gap: 2px; padding: 0 20px 0 2px; }
.address > .dn { margin-top: 8px; }
.address input { flex: 1; min-width: 0; height: 15px; margin-left: 1px; border: 1px solid #c4cacd; background: #ececeb; }
.boxed { width: 11px; height: 14px; background: #fff; }
.history { padding-left: 2px; }
.address input + .boxed { margin-left: -4px; }
.page { display: flex; gap: 7px; padding-left: 1px; }
.doctabs { flex: 0 0 19px; display: flex; align-items: flex-end; border-bottom: 1px solid #c3c9cc; padding-left: 2px; font: 8px/12px Lato, "Open Sans", sans-serif; }
.tab { width: 195px; height: 17px; background: #cbd2d4; border-right: 1px solid #fff; }
.tab span { flex: 1; }
.tab b { width: 9px; line-height: 8px; font-size: 7px; font-family: "DejaVu Sans", sans-serif; }
.tab.on { width: 193px; background: #edf2f4; }
.new { width: 15px; height: 17px; background: #bfc5c8; }

.content { flex: 1; min-height: 0; overflow: hidden; background: #fff; padding-left: 11px; color: #222; }
.controls { display: flex; gap: 6px; padding: 6px 0 11px; font: 11px/13px "Liberation Sans", Arial, sans-serif; }
.field { width: 157px; }
.field label { display: block; font-weight: 700; margin: 0 0 3px 1px; }
.pick { position: relative; }
.pick select { display: block; width: 100%; height: 27px; padding: 0 7px; appearance: none; border: 1px solid #ccc; border-radius: 0; background: #fff; color: #333; font: inherit; }
.pick svg { position: absolute; right: 9px; top: 9px; width: 9px; height: 9px; pointer-events: none; }
.viewer { position: relative; border: solid #d5d9db; border-width: 1px 0 1px 1px; margin: 0 6px 0 1px; }
.scene { width: 100%; height: auto; }
.axis { font: 7px "Liberation Sans", sans-serif; }
.viewer h2 { position: absolute; top: 1px; left: 0; right: 0; text-align: center; font: 700 12px/18px "Open Sans", sans-serif; }
.legend { position: absolute; top: 2px; right: 1px; font: 8px/8px "Liberation Sans", Arial, sans-serif; }
.legend p { text-align: right; }
.scale { display: flex; gap: 6px; margin: 5px 0 0 35px; }
.scale i { width: 15px; height: 78px; background: linear-gradient(#f01c08, #ff7a00 14%, #ffe800 26%, #50f000 38%, #00e800 50%, #00e890 62%, #00e8f0 74%, #0070f0 88%, #0000e8); }
.scale ol { height: 85px; margin-top: -5px; display: flex; flex-direction: column; justify-content: space-between; }
.actions { position: absolute; right: 8px; bottom: 7px; display: flex; gap: 14px; }
.actions svg { width: 16px; height: 16px; }
.facts { width: 305px; margin: 0 auto; border-spacing: 0; font-size: 9px; transform: translateX(-3px); }
.facts th, .facts td { height: 22px; padding: 0 7px; text-align: left; font-weight: 400; color: #555; }
.facts td { width: 152px; font-weight: 700; color: #222; }
.facts tr:nth-child(even) > * { height: 23px; background: #f8f8f8; }
.strip { flex: 0 0 15px; border-top: 1px solid #ccd2d5; background: #ebeff1; }

.status { flex: 0 0 21px; display: flex; align-items: center; gap: 4px; background: #f5fafc; }
.sq { width: 13px; height: 14px; border: 1px solid #aeb5b8; background: #e9edef; }
.plain { border: 0; background: none; margin-left: 2px; }
.status .sq:first-child { width: 11px; border-left: 0; }
.status p { flex: 1; margin-left: 2px; padding-left: 4px; border-left: 1px solid #ccd2d5; }
.find { display: flex; margin-right: 55px; padding-left: 2px; border: solid #bcc3c6; border-width: 0 1px; background: #fff; height: 15px; }
.find button { width: 18px; }
.find button + button { width: 11px; border-left: 1px solid #ccd2d5; }
.status select { width: 90px; height: 15px; padding: 0 4px; appearance: none; border: 1px solid #b5bcbf; border-right: 0; border-radius: 0; background: #fff; color: #444; font: inherit; }
```
